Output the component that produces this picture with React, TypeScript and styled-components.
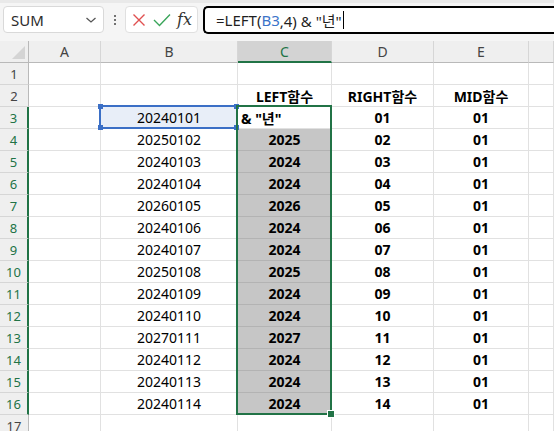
import { FC } from 'react';
import styled, { createGlobalStyle } from 'styled-components';

const GlobalStyle = createGlobalStyle`
    html, body {
        margin: 0;
        padding: 0;
        background: #ffffff;
        overflow: hidden;
    }
    body {
        font-family: "Noto Sans", "Noto Sans CJK KR", sans-serif;
    }
`;

const Page = styled.div`
    width: 554px;
    height: 431px;
    overflow: hidden;
    background: #ffffff;
`;

const Toolbar = styled.div`
    height: 41px;
    box-sizing: border-box;
    background: #f5f5f5;
    border-top: 3px solid #e9e9e9;
    display: flex;
    align-items: flex-start;
    padding: 3px 0 0 3px;
    overflow: hidden;

    & > * {
        flex: none;
    }
`;

const NameBox = styled.div`
    width: 101px;
    height: 27px;
    box-sizing: border-box;
    background: #ffffff;
    border: 1px solid #d9d9d9;
    border-radius: 4px;
    display: flex;
    align-items: center;
    justify-content: space-between;
    padding: 0 6px 0 7px;
    font-size: 15px;
    color: #2b2b2b;
`;

const Dots = styled.div`
    width: 21px;
    height: 27px;
    display: flex;
    flex-direction: column;
    align-items: center;
    justify-content: center;
    gap: 2px;

    span {
        width: 2px;
        height: 2px;
        background: #444;
        border-radius: 1px;
    }
`;

const FxButtons = styled.div`
    width: 73px;
    height: 27px;
    box-sizing: border-box;
    background: #ffffff;
    border: 1px solid #e0e0e0;
    border-radius: 4px;
    display: flex;
    align-items: center;
    justify-content: space-between;
    padding: 0 5px 0 6px;
`;

const FxText = styled.span`
    font-family: "DejaVu Serif", "Liberation Serif", serif;
    font-style: italic;
    font-size: 16px;
    color: #333;
    line-height: 1;
`;

const FormulaBox = styled.div`
    width: 400px;
    height: 28px;
    margin-left: 5px;
    box-sizing: border-box;
    background: #ffffff;
    border: 2px solid #000000;
    border-right: none;
    border-radius: 5px 0 0 5px;
    display: flex;
    align-items: center;
    padding-left: 11px;
    font-size: 15px;
    color: #1f1f1f;
    white-space: pre;
`;

const RefText = styled.span`
    color: #3b73c9;
`;

const Caret = styled.span`
    display: inline-block;
    width: 1px;
    height: 18px;
    background: #000;
    margin-left: 1px;
`;

const SheetWrap = styled.div`
    position: relative;
`;

const Grid = styled.div`
    display: grid;
    grid-template-columns: 29px 72px 137px 94px 102px 95px 1fr;
    grid-auto-rows: 22px;
`;

const Corner = styled.div`
    background: #efefef;
    border-right: 1px solid #b9b9b9;
    border-bottom: 1px solid #b9b9b9;
    position: relative;

    &::after {
        content: '';
        position: absolute;
        right: 3px;
        bottom: 3px;
        width: 13px;
        height: 13px;
        background: #d4d4d4;
        clip-path: polygon(100% 0, 100% 100%, 0 100%);
    }
`;

const ColHead = styled.div<{ $active?: boolean }>`
    background: ${p => (p.$active ? '#d3d3d3' : '#efefef')};
    border-right: 1px solid #d6d6d6;
    border-bottom: ${p => (p.$active ? '2px solid #217346' : '1px solid #b9b9b9')};
    color: ${p => (p.$active ? '#217346' : '#444')};
    display: flex;
    align-items: center;
    justify-content: center;
    font-size: 14px;
    box-sizing: border-box;
`;

const RowHead = styled.div<{ $active?: boolean }>`
    background: #efefef;
    border-bottom: 1px solid #d6d6d6;
    border-right: ${p => (p.$active ? '2px solid #217346' : '1px solid #b9b9b9')};
    color: ${p => (p.$active ? '#217346' : '#444')};
    display: flex;
    align-items: center;
    justify-content: center;
    font-size: 13px;
    box-sizing: border-box;
`;

const Cell = styled.div<{ $bold?: boolean; $fill?: boolean; $left?: boolean; $ref?: boolean }>`
    border-right: 1px solid ${p => (p.$fill ? '#b3b3b3' : '#e1e1e1')};
    border-bottom: 1px solid ${p => (p.$fill ? '#b3b3b3' : '#e1e1e1')};
    background: ${p => (p.$fill ? '#c6c6c6' : p.$ref ? '#e8eef8' : '#ffffff')};
    display: flex;
    align-items: center;
    justify-content: ${p => (p.$left ? 'flex-start' : 'center')};
    padding-left: ${p => (p.$left ? '3px' : '0')};
    font-size: 14px;
    font-weight: ${p => (p.$bold ? 700 : 400)};
    color: #000;
    white-space: pre;
    overflow: hidden;
`;

const RefBox = styled.div`
    position: absolute;
    left: 99px;
    top: 64px;
    width: 139px;
    height: 24px;
    box-sizing: border-box;
    border: 2px solid #3b6fc6;
    pointer-events: none;
`;

const Handle = styled.span<{ $x: 'l' | 'r'; $y: 't' | 'b' }>`
    position: absolute;
    width: 5px;
    height: 5px;
    background: #3b6fc6;
    ${p => (p.$x === 'l' ? 'left: -3px;' : 'right: -3px;')}
    ${p => (p.$y === 't' ? 'top: -3px;' : 'bottom: -3px;')}
`;

const Selection = styled.div`
    position: absolute;
    left: 236px;
    top: 64px;
    width: 96px;
    height: 310px;
    box-sizing: border-box;
    border: 2px solid #217346;
    pointer-events: none;
`;

const FillHandle = styled.span`
    position: absolute;
    right: -5px;
    bottom: -5px;
    width: 6px;
    height: 6px;
    background: #217346;
    border: 1px solid #ffffff;
`;

const bValues = [
    '20240101', '20250102', '20240103', '20240104', '20260105', '20240106', '20240107',
    '20250108', '20240109', '20240110', '20270111', '20240112', '20240113', '20240114',
];

const cols = ['A', 'B', 'C', 'D', 'E', ''];

const Chevron = () => (
    <svg width="12" height="8" viewBox="0 0 12 8">
        <path d="M1.5 2 L6 6 L10.5 2" stroke="#555" strokeWidth="1.3" fill="none" />
    </svg>
);

const CrossIcon = () => (
    <svg width="14" height="14" viewBox="0 0 14 14">
        <path d="M1.5 1.5 L12.5 12.5 M12.5 1.5 L1.5 12.5" stroke="#e05050" strokeWidth="1.4" />
    </svg>
);

const CheckIcon = () => (
    <svg width="18" height="14" viewBox="0 0 18 14">
        <path d="M1 7 L6.5 12.5 L17 1.5" stroke="#3aa55a" strokeWidth="1.4" fill="none" />
    </svg>
);

const Row: FC<{ row: number; b: string; idx: number }> = ({ row, b, idx }) => {
    const first = idx === 0;
    return (
        <>
            <RowHead $active>{row}</RowHead>
            <Cell />
            <Cell $ref={first}>{b}</Cell>
            {first ? (
                <Cell $bold $left>&amp; "년"</Cell>
            ) : (
                <Cell $bold $fill>{b.slice(0, 4)}</Cell>
            )}
            <Cell $bold>{String(idx + 1).padStart(2, '0')}</Cell>
            <Cell $bold>01</Cell>
            <Cell />
        </>
    );
};

const App: FC = () => (
    <Page>
        <GlobalStyle />
        <Toolbar>
            <NameBox>
                SUM
                <Chevron />
            </NameBox>
            <Dots>
                <span />
                <span />
                <span />
            </Dots>
            <FxButtons>
                <CrossIcon />
                <CheckIcon />
                <FxText>fx</FxText>
            </FxButtons>
            <FormulaBox>
                =LEFT(<RefText>B3</RefText>,4) &amp; "년"<Caret />
            </FormulaBox>
        </Toolbar>
        <SheetWrap>
            <Grid>
                <Corner />
                {cols.map((c, i) => (
                    <ColHead key={i} $active={c === 'C'}>{c}</ColHead>
                ))}

                <RowHead>1</RowHead>
                {cols.map((_, i) => <Cell key={i} />)}

                <RowHead>2</RowHead>
                <Cell />
                <Cell />
                <Cell $bold>LEFT함수</Cell>
                <Cell $bold>RIGHT함수</Cell>
                <Cell $bold>MID함수</Cell>
                <Cell />

                {bValues.map((b, i) => (
                    <Row key={b} row={i + 3} b={b} idx={i} />
                ))}

                <RowHead>17</RowHead>
                {cols.map((_, i) => <Cell key={i} />)}
            </Grid>
            <RefBox>
                <Handle $x="l" $y="t" />
                <Handle $x="r" $y="t" />
                <Handle $x="l" $y="b" />
                <Handle $x="r" $y="b" />
            </RefBox>
            <Selection>
                <FillHandle />
            </Selection>
        </SheetWrap>
    </Page>
);

export default App;
